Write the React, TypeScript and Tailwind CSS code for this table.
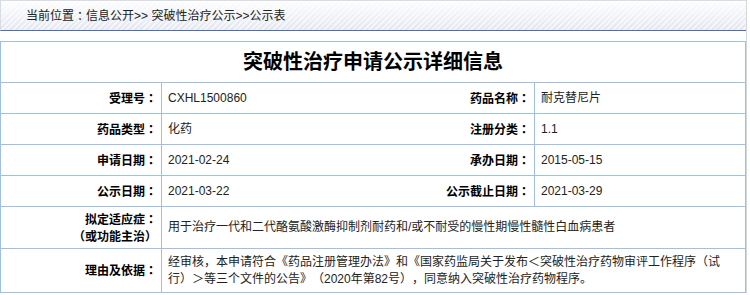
import React from "react";

const font = "font-['Liberation_Sans','Noto_Sans_CJK_SC',sans-serif] [text-spacing-trim:space-all]";

function C() {
  return <span className="font-['Noto_Sans_CJK_JP',sans-serif]">：</span>;
}

function Label({ children, w = "w-[161px]" }: { children: React.ReactNode; w?: string }) {
  return (
    <div className={`${w} shrink-0 flex items-center justify-end pr-[4px] text-right font-bold text-[12px] leading-[17px] text-black border-r border-[#9dc0e4]`}>
      <div>{children}</div>
    </div>
  );
}

function Value({ children, w = "flex-1" }: { children: React.ReactNode; w?: string }) {
  return (
    <div className={`${w} flex items-center pl-[6px] text-[12px] leading-[17px] text-[#222]`}>
      <div>{children}</div>
    </div>
  );
}

function PairRow({ l1, v1, l2, v2 }: { l1: string; v1: string; l2: string; v2: string }) {
  return (
    <div className="flex h-[31px] border-b border-[#9dc0e4]">
      <Label>
        {l1}
        <C />
      </Label>
      <div className="w-[212px] shrink-0 flex items-center pl-[6px] text-[12px] text-[#222]">{v1}</div>
      <Label>
        {l2}
        <C />
      </Label>
      <Value>{v2}</Value>
    </div>
  );
}

export default function App() {
  return (
    <div className={`${font} w-[750px] h-[295px] bg-white overflow-hidden`}>
      <div className="w-[747px] border-r border-[#d3d8e0]">
        <div className="h-[31px] border-t border-l border-[#d8dce5] border-b border-b-[#4a6fb3] flex items-center pl-[25px] text-[12px] text-[#222] bg-[repeating-linear-gradient(135deg,rgba(255,255,255,0.55)_0px,rgba(255,255,255,0.55)_2px,transparent_2px,transparent_4px),linear-gradient(to_bottom,#fdfdfe,#e2e6ef)]">
          当前位置<C />信息公开&gt;&gt; 突破性治疗公示&gt;&gt;公示表
        </div>
        <div className="h-[10px]" />
        <div className="w-[746px] border border-[#9dc0e4]">
          <div className="h-[41px] border-b border-[#9dc0e4] flex items-center justify-center text-[20px] font-bold text-black">
            突破性治疗申请公示详细信息
          </div>
          <PairRow l1="受理号" v1="CXHL1500860" l2="药品名称" v2="耐克替尼片" />
          <PairRow l1="药品类型" v1="化药" l2="注册分类" v2="1.1" />
          <PairRow l1="申请日期" v1="2021-02-24" l2="承办日期" v2="2015-05-15" />
          <PairRow l1="公示日期" v1="2021-03-22" l2="公示截止日期" v2="2021-03-29" />
          <div className="flex h-[42px] border-b border-[#9dc0e4]">
            <Label>
              拟定适应症<C />
              <br />
              （或功能主治）
            </Label>
            <Value>用于治疗一代和二代酪氨酸激酶抑制剂耐药和/或不耐受的慢性期慢性髓性白血病患者</Value>
          </div>
          <div className="flex h-[43px]">
            <Label>
              理由及依据<C />
            </Label>
            <Value>
              经审核，本申请符合《药品注册管理办法》和《国家药监局关于发布＜突破性治疗药物审评工作程序（试
              <br />
              行）＞等三个文件的公告》（2020年第82号），同意纳入突破性治疗药物程序。
            </Value>
          </div>
        </div>
      </div>
    </div>
  );
}
